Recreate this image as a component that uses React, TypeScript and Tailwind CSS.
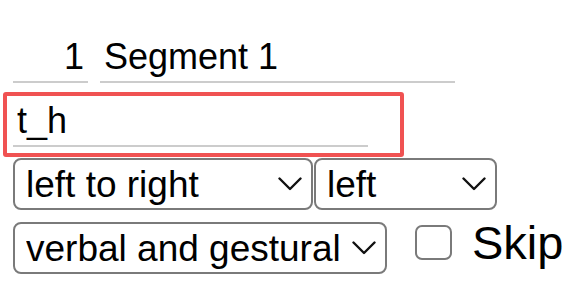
import React from "react";

const font = { fontFamily: '"Liberation Sans", Arial, sans-serif' };

function Chevron() {
  return (
    <svg
      className="pointer-events-none absolute right-[11px] top-1/2 -translate-y-1/2"
      width="24"
      height="14"
      viewBox="0 0 24 14"
      fill="none"
    >
      <path d="M1.5 1.5 L12 12 L22.5 1.5" stroke="#111" strokeWidth="2.4" strokeLinecap="round" strokeLinejoin="round" />
    </svg>
  );
}

function Select({ w, value, options }: { w: string; value: string; options: string[] }) {
  return (
    <div className={`relative ${w} h-[52px]`}>
      <select
        defaultValue={value}
        className="appearance-none w-full h-full rounded-[8px] border-2 border-[#7a7a7a] bg-white pl-[11px] pr-[40px] text-[37px] leading-[41px] text-black outline-none"
        style={font}
      >
        {options.map((o) => (
          <option key={o} value={o}>
            {o}
          </option>
        ))}
      </select>
      <Chevron />
    </div>
  );
}

export default function App() {
  return (
    <div className="w-[586px] h-[295px] bg-white text-black pt-[37px]" style={font}>
      <div className="flex gap-[12px] pl-[13px]">
        <input
          defaultValue="1"
          className="w-[75px] h-[46px] border-b-2 border-[#cccccc] pb-[4px] pr-[4px] text-right text-[36px] outline-none bg-transparent"
          style={font}
        />
        <input
          defaultValue="Segment 1"
          className="w-[355px] h-[46px] border-b-2 border-[#cccccc] pb-[4px] pl-[4px] text-[36px] outline-none bg-transparent"
          style={font}
        />
      </div>
      <div className="mt-[9px] ml-[3px] w-[401px] h-[65px] border-4 border-[#f05252] rounded-[3px] pl-[6px] pt-[5px]">
        <input
          defaultValue="t_h"
          className="w-[355px] h-[46px] border-b-2 border-[#cccccc] pb-[4px] pl-[4px] text-[36px] outline-none bg-transparent"
          style={font}
        />
      </div>
      <div className="mt-[1px] pl-[13px] flex gap-[1px]">
        <Select w="w-[300px]" value="left to right" options={["left to right", "right to left"]} />
        <Select w="w-[183px]" value="left" options={["left", "right"]} />
      </div>
      <div className="mt-[12px] pl-[13px] flex items-start">
        <Select w="w-[374px]" value="verbal and gestural" options={["verbal and gestural", "verbal", "gestural"]} />
        <label className="flex items-start">
          <span className="mt-[3px] ml-[28px] w-[37px] h-[35px] rounded-[7px] border-2 border-[#7a7a7a] bg-white" />
          <span className="ml-[20px] mt-[-3px] text-[47px] leading-[47px]" style={font}>
            Skip
          </span>
        </label>
      </div>
    </div>
  );
}
